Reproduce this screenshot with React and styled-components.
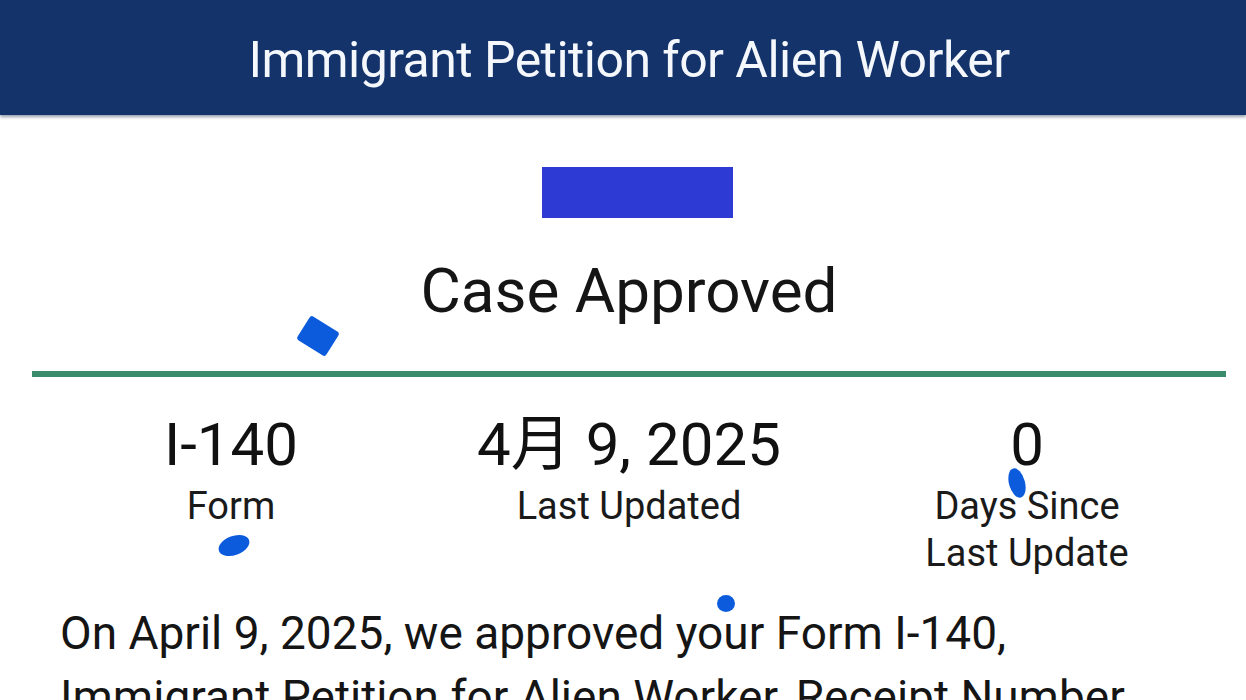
import React from 'react'
import styled, { createGlobalStyle } from 'styled-components'

const GlobalStyle = createGlobalStyle`
  html, body {
    margin: 0;
    padding: 0;
    background: #ffffff;
  }
  body {
    font-family: Roboto, "Noto Sans", "Noto Sans CJK SC", sans-serif;
    color: #111111;
    overflow: hidden;
  }
`

export default function App() {
  return (
    <Page>
      <GlobalStyle />
      <Header>
        <HeaderTitle>Immigrant Petition for Alien Worker</HeaderTitle>
      </Header>
      <Main>
        <Badge />
        <Status>Case Approved</Status>
        <Divider />
        <Stats>
          <Stat>
            <Value>I-140</Value>
            <Label>Form</Label>
          </Stat>
          <Stat>
            <Value>4月 9, 2025</Value>
            <Label>Last Updated</Label>
          </Stat>
          <Stat>
            <Value>0</Value>
            <Label>Days Since<br />Last Update</Label>
          </Stat>
        </Stats>
        <Body>
          On April 9, 2025, we approved your Form I-140, Immigrant Petition for Alien Worker, Receipt Number ,
        </Body>
      </Main>

      {/* blue pen marks drawn over the screenshot */}
      <Mark $x={301} $y={322} $w={34} $h={28} $r={32} $radius="3px" />
      <Mark $x={218} $y={536} $w={32} $h={19} $r={-20} />
      <Mark $x={1009} $y={468} $w={16} $h={30} $r={-15} />
      <Mark $x={717} $y={595} $w={18} $h={17} $r={0} />
    </Page>
  )
}

const Page = styled.div`
  position: relative;
  width: 1246px;
  height: 700px;
  overflow: hidden;
`

const Header = styled.header`
  height: 115px;
  padding-left: 12px;
  background: #14336a;
  display: flex;
  align-items: center;
  justify-content: center;
  box-shadow: 0 2px 3px rgba(20, 40, 70, 0.45);
`

const HeaderTitle = styled.h1`
  margin: 0;
  padding-top: 4px;
  color: #f4f7fb;
  font-weight: 400;
  font-size: 50px;
  letter-spacing: -0.55px;
`

const Main = styled.main`
  padding: 0 20px 0 32px;
  display: flex;
  flex-direction: column;
`

const Badge = styled.div`
  align-self: center;
  width: 191px;
  height: 51px;
  margin: 52px 0 0 17px;
  background: #2d3ad3;
`

const Status = styled.h2`
  margin: 37px 0 0;
  text-align: center;
  font-weight: 400;
  font-size: 62px;
  line-height: 72px;
  color: #151515;
`

const Divider = styled.hr`
  margin: 44px 0 0;
  border: 0;
  height: 6px;
  background: #3b8c6c;
`

const Stats = styled.div`
  display: grid;
  grid-template-columns: repeat(3, 1fr);
  margin-top: 33px;
`

const Stat = styled.div`
  display: flex;
  flex-direction: column;
  align-items: center;
  text-align: center;
`

const Value = styled.div`
  font-size: 60px;
  line-height: 70px;
  color: #111111;
`

const Label = styled.div`
  margin-top: 3px;
  font-size: 38px;
  line-height: 47px;
  color: #1a1a1a;
`

const Body = styled.p`
  width: 1100px;
  margin: 24px 0 0 28px;
  font-size: 46px;
  line-height: 64px;
  color: #151515;
`

const Mark = styled.span`
  position: absolute;
  left: ${p => p.$x}px;
  top: ${p => p.$y}px;
  width: ${p => p.$w}px;
  height: ${p => p.$h}px;
  background: #0b5bdc;
  border-radius: ${p => p.$radius || '50%'};
  transform: rotate(${p => p.$r}deg);
`
